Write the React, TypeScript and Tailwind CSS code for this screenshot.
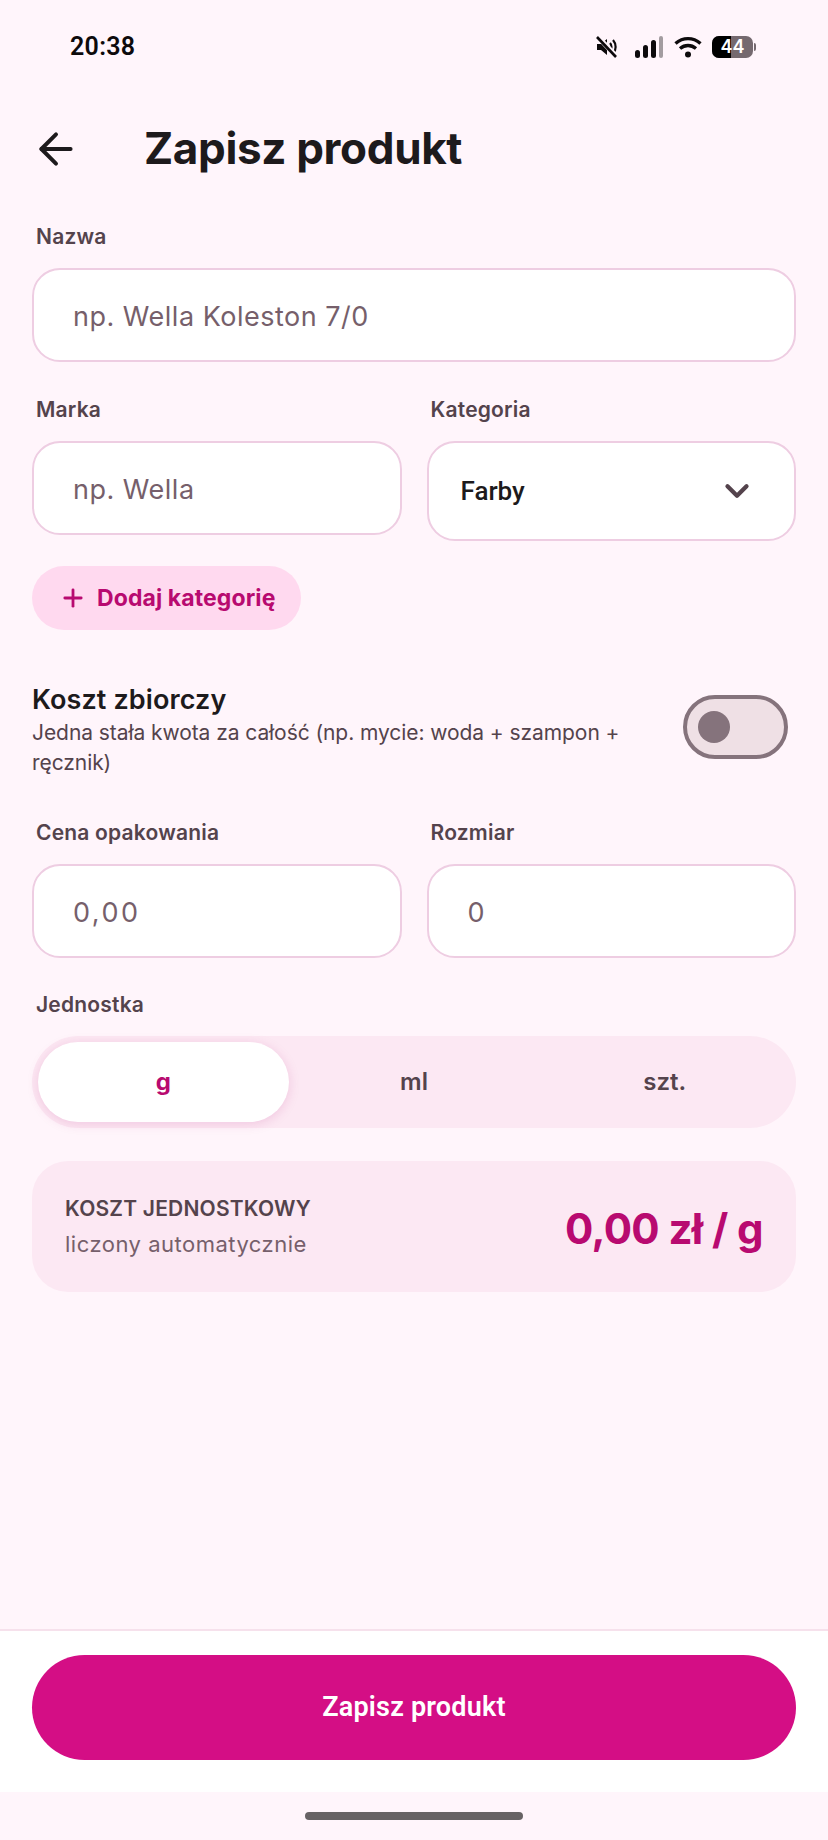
import { ArrowLeft, ChevronDown, Plus } from 'lucide-react';

const font = "font-['Inter','Liberation_Sans',sans-serif]";

function Label({ children }: { children: string }) {
  return <p className="h-6 pl-1 text-[21px] leading-6 font-semibold tracking-[0.2px] text-[#54434c]">{children}</p>;
}

function Field({ placeholder, wide }: { placeholder: string; wide?: boolean }) {
  return (
    <input
      readOnly
      placeholder={placeholder}
      className={`mt-[19px] h-[94px] w-full rounded-[28px] border-2 border-[#eecde2] bg-white pt-[2px] pl-[39px] text-[27px] text-[#765f6b] outline-none placeholder:text-[#765f6b] ${wide ? 'tracking-[2.5px]' : 'tracking-[0.5px]'}`}
    />
  );
}

function StatusIcons() {
  return (
    <div className="flex items-center">
      <svg width="24" height="24" viewBox="0 0 24 24" className="mr-[16px]">
        <path d="M2 9h4l6-5v16l-6-5H2z" fill="#0d0a0c" />
        <path d="M15 8c2 2 2 6 0 8M18 5c3.5 4 3.5 10 0 14" fill="none" stroke="#0d0a0c" strokeWidth="2.2" />
        <path d="M3 2l19 20" stroke="#fff5fb" strokeWidth="5" />
        <path d="M2 2l19 20" stroke="#0d0a0c" strokeWidth="2.6" />
      </svg>
      <svg width="28" height="22" viewBox="0 0 28 22" className="mr-[11px]">
        <rect x="0" y="14" width="5" height="8" rx="2.5" fill="#0d0a0c" />
        <rect x="8" y="9" width="5" height="13" rx="2.5" fill="#0d0a0c" />
        <rect x="16" y="4" width="5" height="18" rx="2.5" fill="#0d0a0c" />
        <rect x="24" y="0" width="4" height="22" rx="2" fill="#a39ca0" />
      </svg>
      <svg width="28" height="22" viewBox="0 0 28 22" className="mr-[10px]">
        <path d="M1.5 7.5C9 1 19 1 26.5 7.5M6 12.5c4.8-4 11.2-4 16 0" fill="none" stroke="#0d0a0c" strokeWidth="3.4" />
        <circle cx="14" cy="18.5" r="3" fill="#0d0a0c" />
      </svg>
      <div className="relative flex h-[22px] w-[41px] items-center justify-center overflow-hidden rounded-[7px] bg-[#75696f]">
        <div className="absolute inset-y-0 left-0 w-[19px] bg-black" />
        <span className="relative text-[18px] leading-none font-semibold text-white">44</span>
      </div>
      <div className="ml-[1px] h-2 w-[2px] rounded-r bg-[#75696f]" />
    </div>
  );
}

export default function App() {
  return (
    <div className={`flex h-[1840px] w-[828px] flex-col overflow-hidden bg-[#fff5fb] ${font}`}>
      <div className="flex h-[94px] items-center justify-between pr-[72px] pl-[70px]">
        <span className="font-['Roboto',sans-serif] text-[25px] font-semibold tracking-[0.3px] text-[#0d0a0c]">20:38</span>
        <StatusIcons />
      </div>

      <div className="flex h-[110px] items-center pl-[31px]">
        <ArrowLeft size={50} strokeWidth={1.9} className="shrink-0 text-[#1d1a1c]" />
        <h1 className="ml-[63px] pb-[2px] text-[44px] font-bold tracking-[-0.35px] text-[#1d1a1c]">Zapisz produkt</h1>
      </div>

      <main className="flex flex-1 flex-col px-[32px] pt-[21px]">
        <Label>Nazwa</Label>
        <Field placeholder="np. Wella Koleston 7/0" />

        <div className="mt-[36px] grid grid-cols-2 gap-x-[25px]">
          <div>
            <Label>Marka</Label>
            <Field placeholder="np. Wella" />
          </div>
          <div>
            <Label>Kategoria</Label>
            <div className="mt-[19px] flex h-[100px] items-center justify-between rounded-[28px] border-2 border-[#eecde2] bg-white pr-[38px] pl-[32px]">
              <span className="font-['Roboto',sans-serif] text-[26px] font-medium text-[#1d1a1c]">Farby</span>
              <ChevronDown size={38} strokeWidth={2.7} className="text-[#54434c]" />
            </div>
          </div>
        </div>

        <button className="mt-[25px] flex h-16 w-[269px] items-center gap-[10px] rounded-full bg-[#ffd9ef] pl-[27px] text-[23px] font-bold tracking-[0.1px] text-[#b80a70]">
          <Plus size={28} strokeWidth={2.4} />
          Dodaj kategorię
        </button>

        <div className="mt-[55px] flex items-start justify-between">
          <div className="w-[610px]">
            <p className="text-[27px] leading-[30px] font-semibold tracking-[0.1px] text-[#1d1a1c]">Koszt zbiorczy</p>
            <p className="mt-[3px] text-[21px] leading-[30px] tracking-[-0.07px] text-[#54434c]">
              Jedna stała kwota za całość (np. mycie: woda + szampon + ręcznik)
            </p>
          </div>
          <div className="mt-[10px] mr-2 flex h-16 w-[105px] items-center rounded-full border-[4px] border-[#85737c] bg-[#efe0e5] pl-[11px]">
            <div className="h-8 w-8 rounded-full bg-[#85737c]" />
          </div>
        </div>

        <div className="mt-[43px] grid grid-cols-2 gap-x-[25px]">
          <div>
            <Label>Cena opakowania</Label>
            <Field placeholder="0,00" wide />
          </div>
          <div>
            <Label>Rozmiar</Label>
            <Field placeholder="0" />
          </div>
        </div>

        <div className="mt-[35px]">
          <Label>Jednostka</Label>
        </div>
        <div className="mt-[19px] grid h-[92px] grid-cols-3 rounded-full bg-[#fce8f3] p-[6px] text-[24px] font-semibold text-[#54434c]">
          <div className="flex items-center justify-center rounded-full bg-white font-bold text-[#b80a70] shadow-[0_2px_12px_rgba(176,10,112,0.15)]">g</div>
          <div className="flex items-center justify-center">ml</div>
          <div className="flex items-center justify-center">szt.</div>
        </div>

        <div className="mt-[33px] flex h-[131px] items-center justify-between rounded-[36px] bg-[#fce8f3] px-[33px]">
          <div>
            <p className="text-[21px] leading-8 font-semibold tracking-[0.2px] text-[#54434c]">KOSZT JEDNOSTKOWY</p>
            <p className="mt-[3px] text-[22px] leading-8 tracking-[0.5px] text-[#765f6b]">liczony automatycznie</p>
          </div>
          <p className="pt-[4px] text-[42px] font-bold tracking-[-0.6px] text-[#b80a70]">0,00 zł / g</p>
        </div>
      </main>

      <footer className="h-[163px] border-t-2 border-[#f6e1ec] bg-white px-[32px] pt-[24px]">
        <button className="h-[105px] w-full rounded-full bg-[#d40e85] font-['Roboto',sans-serif] text-[27px] font-semibold tracking-[0.2px] text-white">
          Zapisz produkt
        </button>
      </footer>
      <div className="flex h-[48px] justify-center pt-5">
        <div className="h-2 w-[218px] rounded-full bg-[#676264]" />
      </div>
    </div>
  );
}
